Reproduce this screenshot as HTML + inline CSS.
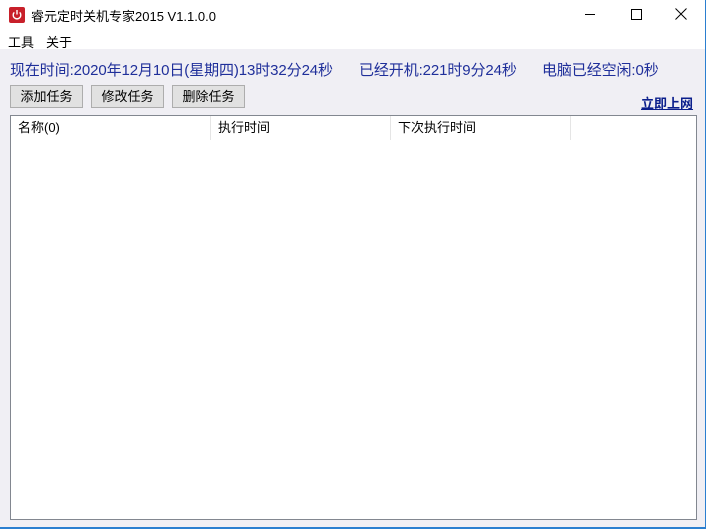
<!DOCTYPE html><html><head><style>
body{margin:0;width:706px;height:529px;overflow:hidden;background:#f0eff4;font-family:"Liberation Sans","Noto Sans CJK SC",sans-serif;position:relative}
.a{position:absolute}
#tb{left:0;top:0;width:705px;height:30px;background:#fff}
#mn{left:0;top:30px;width:705px;height:19px;background:#fff;font-size:13px}
.btn{position:absolute;top:85px;width:71px;height:21px;border:1px solid #adadad;background:#e1e1e1;font-size:13px;text-align:center;line-height:21px;color:#000}
.t{color:#1f2f9a;font-size:15px;top:59px;letter-spacing:-0.1px}
#ls{left:10px;top:115px;width:685px;height:403px;background:#fff;border:1px solid #828790}
.h{position:absolute;top:0;height:24px;line-height:24px;font-size:13px;border-right:1px solid #e5e5e5;padding-left:7px;box-sizing:border-box}
</style></head><body>
<div class="a" id="tb">
<div class="a" style="left:9px;top:7px;width:16px;height:16px;background:#c8202a;border-radius:2px"><svg width="16" height="16"><path d="M5.3 5.4A3.8 3.8 0 1 0 10.7 5.4" stroke="#fff" stroke-width="1.4" fill="none"/><path d="M8 3v4.5" stroke="#fff" stroke-width="1.4"/></svg></div>
<div class="a" style="left:31px;top:6px;font-size:13px">睿元定时关机专家2015 V1.1.0.0</div>
<div class="a" style="left:585px;top:14px;width:10px;height:1px;background:#000"></div>
<div class="a" style="left:631px;top:9px;width:9px;height:9px;border:1px solid #000"></div>
<svg class="a" style="left:675px;top:8px" width="12" height="12"><path d="M0.5 0.5L11.5 11.5M11.5 0.5L0.5 11.5" stroke="#000"/></svg>
</div>
<div class="a" id="mn"><span class="a" style="left:8px;top:2px">工具</span><span class="a" style="left:46px;top:2px">关于</span></div>
<div class="a t" style="left:10px">现在时间:2020年12月10日(星期四)13时32分24秒</div>
<div class="a t" style="left:359px">已经开机:221时9分24秒</div>
<div class="a t" style="left:542px">电脑已经空闲:0秒</div>
<div class="btn" style="left:10px">添加任务</div>
<div class="btn" style="left:91px">修改任务</div>
<div class="btn" style="left:172px">删除任务</div>
<div class="a" style="left:641px;top:93px;font-size:13px;font-weight:bold;color:#0b1f8c;text-decoration:underline">立即上网</div>
<div class="a" id="ls">
<div class="h" style="left:0;width:200px">名称(0)</div>
<div class="h" style="left:200px;width:180px">执行时间</div>
<div class="h" style="left:380px;width:180px">下次执行时间</div>
</div>
<div class="a" style="left:705px;top:0;width:1px;height:529px;background:#2b7fd0"></div>
<div class="a" style="left:0;top:527px;width:706px;height:2px;background:#2b7fd0"></div>
</body></html>
